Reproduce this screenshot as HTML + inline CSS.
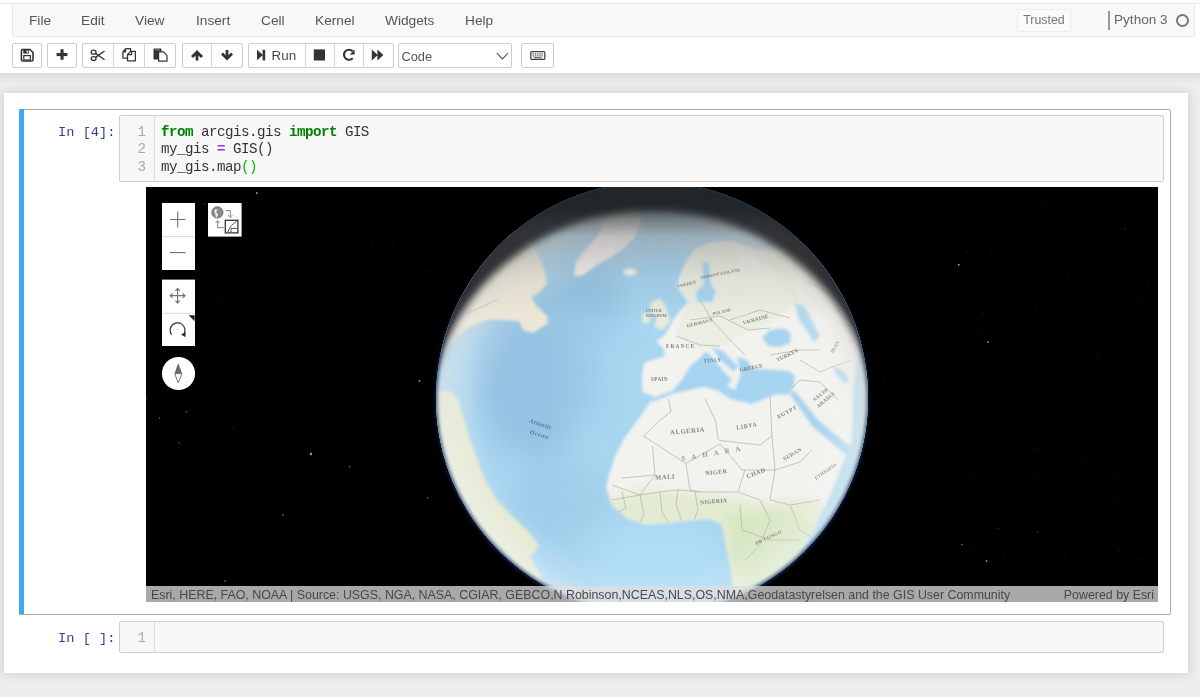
<!DOCTYPE html>
<html><head><meta charset="utf-8">
<style>
html,body{margin:0;padding:0;}
body{width:1200px;height:697px;overflow:hidden;position:relative;background:#fff;will-change:transform;font-family:"Liberation Sans",sans-serif;}
.abs{position:absolute;}
#topline{left:0;top:3px;width:1200px;height:1px;background:#ececec;}
#menubar{left:12px;top:3px;width:1181px;height:32px;background:#f8f8f8;border:1px solid #e7e7e7;border-radius:2px;}
.menu{position:absolute;top:13px;font-size:13.7px;color:#555;line-height:16px;}
#trusted{left:1017px;top:9px;width:52px;height:21px;border:1px solid #ececec;background:#fbfbfb;border-radius:2px;font-size:12.4px;color:#777;line-height:21px;text-align:center;}
#kbar{left:1108px;top:11px;width:2px;height:19px;background:#999;}
#kname{left:1114px;top:12px;font-size:13.6px;color:#666;line-height:16px;}
#kcirc{left:1176px;top:14px;width:9px;height:9px;border:2px solid #777;border-radius:50%;}
.btn{position:absolute;top:43px;height:23px;border:1px solid #ccc;background:#fff;border-radius:2px;}
.sep{position:absolute;top:0;width:1px;height:23px;background:#d4d4d4;}
#gray{left:0;top:73px;width:1200px;height:624px;background:#eee;}
#gshadow{left:0;top:73px;width:1200px;height:12px;background:linear-gradient(#dcdcdc,#eee);}
#container{left:4px;top:93px;width:1184px;height:580px;background:#fff;box-shadow:0 0 10px 1px rgba(87,87,87,0.2);}
#cell{left:19px;top:109px;width:1151px;height:504px;border:1px solid #ababab;border-left:none;border-radius:0 2px 2px 0;}
#bluebar{left:19px;top:109px;width:5px;height:505px;background:#42a5f5;}
.prompt{position:absolute;font-family:"Liberation Mono",monospace;font-size:13.7px;letter-spacing:0px;color:#303f9f;line-height:17px;}
.inbox{position:absolute;background:#f7f7f7;border:1px solid #cfcfcf;border-radius:2px;}
.gutter{position:absolute;left:0;top:0;width:34px;height:100%;border-right:1px solid #ddd;background:#f7f7f7;}
.code{position:absolute;font-family:"Liberation Mono",monospace;font-size:14.2px;letter-spacing:-0.52px;line-height:17.7px;color:#333;white-space:pre;}
.ln{position:absolute;font-family:"Liberation Mono",monospace;font-size:14.2px;line-height:17.7px;color:#aaa;text-align:right;width:27px;white-space:pre;}
.kw{color:#008000;font-weight:bold;}
.op{color:#aa22ff;font-weight:bold;}
.br{color:#0b0;}
#map{left:146px;top:187px;width:1012px;height:415px;background:#000;overflow:hidden;}
#attr{position:absolute;left:0;bottom:0;width:1012px;height:16px;background:rgba(222,222,222,0.76);font-size:12px;line-height:16px;color:#444;}
</style></head><body>
<div class="abs" id="topline"></div>
<div class="abs" id="menubar"></div>
<div class="menu" style="left:29px">File</div>
<div class="menu" style="left:81px">Edit</div>
<div class="menu" style="left:135px">View</div>
<div class="menu" style="left:196px">Insert</div>
<div class="menu" style="left:261px">Cell</div>
<div class="menu" style="left:315px">Kernel</div>
<div class="menu" style="left:385px">Widgets</div>
<div class="menu" style="left:465px">Help</div>
<div class="abs" id="trusted">Trusted</div>
<div class="abs" id="kbar"></div>
<div class="abs" id="kname">Python 3</div>
<div class="abs" id="kcirc"></div>

<!-- toolbar -->
<div class="btn" style="left:12px;width:28px"></div>
<div class="btn" style="left:47px;width:28px"></div>
<div class="btn" style="left:82px;width:92px"><div class="sep" style="left:30px"></div><div class="sep" style="left:61px"></div></div>
<div class="btn" style="left:182px;width:59px"><div class="sep" style="left:28px"></div></div>
<div class="btn" style="left:248px;width:144px"><div class="sep" style="left:56px"></div><div class="sep" style="left:85px"></div><div class="sep" style="left:114px"></div></div>
<div class="btn" style="left:398px;width:112px"></div>
<div class="btn" style="left:521px;width:31px"></div>
<svg class="abs" style="left:0;top:40px" width="560" height="30" viewBox="0 40 560 30">
<g fill="#333" stroke="none">
<!-- save -->
<path d="M21.5 49.5 h8.5 l3 3 v7.2 a1.3 1.3 0 0 1 -1.3 1.3 h-9 a1.3 1.3 0 0 1 -1.3 -1.3 v-9 a1.3 1.3 0 0 1 1.1 -1.2 z" fill="none" stroke="#333" stroke-width="1.6"/>
<rect x="23.3" y="50" width="5.5" height="3.6" fill="#333"/>
<rect x="26.6" y="50.6" width="1.3" height="2.2" fill="#fff"/>
<rect x="23.8" y="55.6" width="6.6" height="4.4" fill="none" stroke="#333" stroke-width="1.2"/>
<!-- plus -->
<rect x="56.6" y="53" width="10.8" height="3.1"/>
<rect x="60.5" y="49.2" width="3.1" height="10.6"/>
<!-- scissors -->
<g fill="none" stroke="#333" stroke-width="1.3">
<ellipse cx="93.6" cy="52.2" rx="2.4" ry="2"/>
<ellipse cx="93.6" cy="58.6" rx="2.4" ry="2"/>
<path d="M95.6 53.4 L104.5 59.8 M95.6 57.4 L104.5 51"/>
</g>
<!-- copy -->
<g fill="none" stroke="#333" stroke-width="1.25" stroke-linejoin="round">
<path d="M125.6 48.6 H130.6 V51.4 M125.6 48.6 L122.9 51.8 V58.1 H127.5 M125.6 48.6 V51.8 H122.9"/>
<path d="M130.6 51.4 H135.4 V60.8 H127.5 V54.5 Z M131.6 51.4 V54.5 H127.5"/>
</g>
<!-- paste -->
<rect x="153.5" y="48.6" width="8" height="11" rx="0.8"/>
<path d="M158.6 51.8 h4.8 l3.6 3.6 v5.8 h-8.4 z" fill="#fff" stroke="#333" stroke-width="1.2"/>
<rect x="155" y="49" width="5" height="1.5" fill="#666"/>
<!-- up -->
<path d="M197 50 L203 56 L201 58 L198.4 55.4 V60.6 H195.6 V55.4 L193 58 L191 56 Z"/>
<!-- down -->
<path d="M227 60.6 L233 54.6 L231 52.6 L228.4 55.2 V50 H225.6 V55.2 L223 52.6 L221 54.6 Z"/>
<!-- step forward -->
<path d="M257 49.8 L263 55 L257 60.2 Z"/>
<rect x="262.6" y="49.8" width="2.6" height="10.6"/>
<!-- stop -->
<rect x="313.8" y="49.4" width="11.2" height="11.1"/>
<!-- repeat -->
<path d="M352.6 51.3 A5 5 0 1 0 352.8 58.1" fill="none" stroke="#333" stroke-width="2.1"/>
<path d="M354.6 49.6 V54.4 H349.8 Z"/>
<!-- forward -->
<path d="M371.8 49.4 L377.8 54.9 L371.8 60.4 Z M377.4 49.4 L383.4 54.9 L377.4 60.4 Z"/>
<!-- chevron -->
<path d="M496.8 53.2 L502.4 59 L508 53.2" fill="none" stroke="#555" stroke-width="1.1"/>
<!-- keyboard -->
<rect x="530.8" y="51.6" width="14" height="7.8" rx="1" fill="none" stroke="#444" stroke-width="1.3"/>
<g fill="#555">
<rect x="532.6" y="53.3" width="1.4" height="1.2"/><rect x="534.8" y="53.3" width="1.4" height="1.2"/><rect x="537" y="53.3" width="1.4" height="1.2"/><rect x="539.2" y="53.3" width="1.4" height="1.2"/><rect x="541.4" y="53.3" width="1.4" height="1.2"/>
<rect x="532.6" y="55.3" width="1.4" height="1.2"/><rect x="534.8" y="55.3" width="1.4" height="1.2"/><rect x="537" y="55.3" width="1.4" height="1.2"/><rect x="539.2" y="55.3" width="1.4" height="1.2"/><rect x="541.4" y="55.3" width="1.4" height="1.2"/>
<rect x="534" y="57.2" width="7.6" height="1.1"/>
</g>
</g>
<text x="271.6" y="59.8" font-family="Liberation Sans" font-size="13.4" fill="#4a4a4a">Run</text>
<text x="401.5" y="61" font-family="Liberation Sans" font-size="12.8" fill="#555">Code</text>
</svg>

<div class="abs" id="gray"></div>
<div class="abs" id="gshadow"></div>
<div class="abs" id="container"></div>
<div class="abs" id="cell"></div>
<div class="abs" id="bluebar"></div>
<div class="prompt" style="left:58px;top:124px">In [4]:</div>
<div class="inbox" style="left:119px;top:115px;width:1043px;height:65px"><div class="gutter"></div></div>
<div class="ln" style="left:119px;top:123.5px">1
2
3</div>
<div class="code" style="left:161px;top:123.5px"><span class="kw">from</span> arcgis.gis <span class="kw">import</span> GIS
my_gis <span class="op">=</span> GIS()
my_gis.map<span class="br">()</span></div>

<div class="abs" id="map">
<svg width="1012" height="415" viewBox="146 187 1012 415" style="position:absolute;left:0;top:0;display:block">
<defs>
<clipPath id="gclip"><circle cx="652" cy="398" r="216"/></clipPath>
<radialGradient id="haze" cx="652" cy="398" r="216" gradientUnits="userSpaceOnUse">
<stop offset="0" stop-color="#fff" stop-opacity="0"/>
<stop offset="0.8" stop-color="#fff" stop-opacity="0"/>
<stop offset="0.92" stop-color="#fff" stop-opacity="0.2"/>
<stop offset="0.975" stop-color="#f4f9fc" stop-opacity="0.36"/>
<stop offset="0.99" stop-color="#d8ecf8" stop-opacity="0.5"/>
<stop offset="1" stop-color="#5a7ab0" stop-opacity="0.75"/>
</radialGradient>
<radialGradient id="fog" cx="652" cy="432" r="224" gradientUnits="userSpaceOnUse">
<stop offset="0" stop-color="#fff" stop-opacity="0"/>
<stop offset="0.72" stop-color="#fff" stop-opacity="0"/>
<stop offset="0.86" stop-color="#f0eee8" stop-opacity="0.25"/>
<stop offset="0.95" stop-color="#dcdad4" stop-opacity="0.5"/>
<stop offset="1" stop-color="#c8c6c0" stop-opacity="0.6"/>
</radialGradient>
<linearGradient id="topshade" x1="0" y1="182" x2="0" y2="320" gradientUnits="userSpaceOnUse">
<stop offset="0" stop-color="#1e2428" stop-opacity="0.95"/>
<stop offset="0.2" stop-color="#1e2428" stop-opacity="0.7"/>
<stop offset="0.4" stop-color="#404040" stop-opacity="0.28"/>
<stop offset="0.7" stop-color="#404040" stop-opacity="0.08"/>
<stop offset="1" stop-color="#404040" stop-opacity="0"/>
</linearGradient>
<filter id="blur1" x="-10%" y="-10%" width="120%" height="120%"><feGaussianBlur stdDeviation="1.4"/></filter>
<filter id="blur4" x="-20%" y="-20%" width="140%" height="140%"><feGaussianBlur stdDeviation="3.5"/></filter>
<filter id="blur12" x="-50%" y="-50%" width="200%" height="200%"><feGaussianBlur stdDeviation="14"/></filter>
<linearGradient id="glowg" x1="0" y1="182" x2="0" y2="614" gradientUnits="userSpaceOnUse"><stop offset="0" stop-color="#1a2858" stop-opacity="0"/><stop offset="0.45" stop-color="#1a2858" stop-opacity="0.5"/><stop offset="1" stop-color="#1c2c60" stop-opacity="1"/></linearGradient>
<linearGradient id="fogmaskg" x1="436" y1="0" x2="600" y2="0" gradientUnits="userSpaceOnUse"><stop offset="0" stop-color="#fff" stop-opacity="0.6"/><stop offset="1" stop-color="#fff" stop-opacity="1"/></linearGradient>
<mask id="fogmask" maskUnits="userSpaceOnUse" x="400" y="150" width="500" height="500"><rect x="400" y="150" width="500" height="500" fill="url(#fogmaskg)"/></mask>
<linearGradient id="leftshade" x1="436" y1="0" x2="560" y2="0" gradientUnits="userSpaceOnUse"><stop offset="0" stop-color="#2a4a68" stop-opacity="0.3"/><stop offset="0.5" stop-color="#2a4a68" stop-opacity="0.08"/><stop offset="1" stop-color="#2a4a68" stop-opacity="0"/></linearGradient>
<clipPath id="afr"><path d="M900 380 L900 620 L738 620 L732 576 L726 547 L722 525 L710 519 L678 522 L647 525 L628 519 L612 506 L606 487 L609 475 L615 456 L625 437 L637 421 L650 402 L700 385 Z"/></clipPath>
<filter id="g3" x="-30%" y="-30%" width="160%" height="160%"><feGaussianBlur stdDeviation="4"/></filter>
<linearGradient id="fogmaskv" x1="0" y1="182" x2="0" y2="614" gradientUnits="userSpaceOnUse"><stop offset="0" stop-color="#fff" stop-opacity="1"/><stop offset="0.45" stop-color="#fff" stop-opacity="0.85"/><stop offset="1" stop-color="#fff" stop-opacity="0.3"/></linearGradient>
<mask id="fogmask2" maskUnits="userSpaceOnUse" x="400" y="150" width="500" height="500"><rect x="400" y="150" width="500" height="500" fill="url(#fogmaskv)"/></mask>
<filter id="glow" x="-20%" y="-20%" width="140%" height="140%"><feGaussianBlur stdDeviation="1.6"/></filter>
<filter id="tb" x="-20%" y="-50%" width="140%" height="200%"><feGaussianBlur stdDeviation="0.6"/></filter>
</defs>
<rect x="146" y="187" width="1012" height="415" fill="#000"/>
<circle cx="256.8" cy="193" r="1.04" fill="#fff" opacity="0.56"/><circle cx="419.5" cy="381" r="0.88" fill="#fff" opacity="0.56"/><circle cx="405" cy="208" r="0.48" fill="#fff" opacity="0.28"/><circle cx="372" cy="242.7" r="0.48" fill="#fff" opacity="0.28"/><circle cx="393" cy="245.7" r="0.48" fill="#fff" opacity="0.28"/><circle cx="409.5" cy="259" r="0.48" fill="#fff" opacity="0.28"/><circle cx="305.6" cy="253" r="0.48" fill="#fff" opacity="0.28"/><circle cx="430.6" cy="271" r="0.48" fill="#fff" opacity="0.28"/><circle cx="302.6" cy="352" r="0.48" fill="#fff" opacity="0.28"/><circle cx="379" cy="377" r="0.48" fill="#fff" opacity="0.28"/><circle cx="221" cy="301.5" r="0.48" fill="#fff" opacity="0.28"/><circle cx="204.7" cy="203.6" r="0.56" fill="#fff" opacity="0.35"/><circle cx="311" cy="454" r="1.20" fill="#fff" opacity="0.63"/><circle cx="349.6" cy="466.8" r="0.80" fill="#fff" opacity="0.49"/><circle cx="283" cy="515" r="0.80" fill="#fff" opacity="0.56"/><circle cx="427.6" cy="497.8" r="0.80" fill="#fff" opacity="0.49"/><circle cx="225" cy="581" r="0.80" fill="#fff" opacity="0.56"/><circle cx="186.7" cy="411.7" r="0.72" fill="#fff" opacity="0.49"/><circle cx="159.5" cy="418" r="0.72" fill="#fff" opacity="0.42"/><circle cx="179" cy="442.7" r="0.72" fill="#fff" opacity="0.42"/><circle cx="233" cy="428.6" r="0.48" fill="#fff" opacity="0.28"/><circle cx="146" cy="399" r="0.64" fill="#fff" opacity="0.42"/><circle cx="958.8" cy="264.7" r="0.96" fill="#fff" opacity="0.59"/><circle cx="988" cy="342" r="0.88" fill="#fff" opacity="0.56"/><circle cx="1125" cy="229" r="0.56" fill="#fff" opacity="0.35"/><circle cx="1153.7" cy="228" r="0.48" fill="#fff" opacity="0.28"/><circle cx="1122" cy="251" r="0.48" fill="#fff" opacity="0.28"/><circle cx="1068" cy="276" r="0.48" fill="#fff" opacity="0.28"/><circle cx="1148" cy="283" r="0.48" fill="#fff" opacity="0.28"/><circle cx="1141.6" cy="301" r="0.48" fill="#fff" opacity="0.28"/><circle cx="1036" cy="310" r="0.48" fill="#fff" opacity="0.28"/><circle cx="1066" cy="308" r="0.48" fill="#fff" opacity="0.28"/><circle cx="1009" cy="328" r="0.48" fill="#fff" opacity="0.28"/><circle cx="979" cy="331" r="0.48" fill="#fff" opacity="0.28"/><circle cx="897.6" cy="339" r="0.48" fill="#fff" opacity="0.28"/><circle cx="917" cy="361.7" r="0.48" fill="#fff" opacity="0.28"/><circle cx="986.5" cy="196" r="0.48" fill="#fff" opacity="0.28"/><circle cx="1046" cy="203.6" r="0.48" fill="#fff" opacity="0.28"/><circle cx="967" cy="252" r="0.48" fill="#fff" opacity="0.28"/><circle cx="991" cy="251" r="0.48" fill="#fff" opacity="0.28"/><circle cx="979" cy="284" r="0.48" fill="#fff" opacity="0.28"/><circle cx="983" cy="313.5" r="0.48" fill="#fff" opacity="0.28"/><circle cx="1096.7" cy="354.8" r="0.48" fill="#fff" opacity="0.28"/><circle cx="884" cy="381" r="0.48" fill="#fff" opacity="0.28"/><circle cx="986.5" cy="561" r="0.88" fill="#fff" opacity="0.56"/><circle cx="961.8" cy="544.5" r="0.80" fill="#fff" opacity="0.49"/><circle cx="998.5" cy="528.5" r="0.56" fill="#fff" opacity="0.35"/><circle cx="1037.7" cy="531.6" r="0.56" fill="#fff" opacity="0.35"/><circle cx="1037.7" cy="448.7" r="0.48" fill="#fff" opacity="0.28"/><circle cx="1083" cy="461" r="0.48" fill="#fff" opacity="0.28"/><circle cx="1052.8" cy="463.8" r="0.48" fill="#fff" opacity="0.28"/><circle cx="997" cy="457.8" r="0.48" fill="#fff" opacity="0.28"/><circle cx="973" cy="475" r="0.48" fill="#fff" opacity="0.28"/><circle cx="921.7" cy="494.8" r="0.48" fill="#fff" opacity="0.28"/><circle cx="914" cy="419" r="0.48" fill="#fff" opacity="0.28"/><circle cx="1107" cy="417" r="0.48" fill="#fff" opacity="0.28"/><circle cx="1117.5" cy="479.5" r="0.48" fill="#fff" opacity="0.28"/><circle cx="1114.5" cy="497.5" r="0.48" fill="#fff" opacity="0.28"/><circle cx="1119" cy="550.5" r="0.48" fill="#fff" opacity="0.28"/><circle cx="1141.6" cy="559" r="0.48" fill="#fff" opacity="0.28"/><circle cx="906.7" cy="571.6" r="0.48" fill="#fff" opacity="0.28"/><circle cx="1004.6" cy="557.8" r="0.48" fill="#fff" opacity="0.28"/><circle cx="947" cy="556.6" r="0.48" fill="#fff" opacity="0.28"/><circle cx="897.6" cy="551.7" r="0.48" fill="#fff" opacity="0.28"/><circle cx="1065" cy="557" r="0.48" fill="#fff" opacity="0.28"/><circle cx="1037.7" cy="478.3" r="0.48" fill="#fff" opacity="0.28"/><circle cx="974.5" cy="548.7" r="0.48" fill="#fff" opacity="0.28"/>
<circle cx="652" cy="398.5" r="217.5" fill="url(#glowg)" filter="url(#glow)"/>
<g clip-path="url(#gclip)">
<rect x="430" y="180" width="450" height="440" fill="#a8d5f0"/>
<g filter="url(#blur12)">
<ellipse cx="535" cy="370" rx="60" ry="90" fill="#95c3e3"/>
<ellipse cx="580" cy="300" rx="45" ry="40" fill="#98c6e4"/>
<ellipse cx="560" cy="500" rx="45" ry="40" fill="#9ecde9"/>
<ellipse cx="660" cy="565" rx="70" ry="40" fill="#b0ddf6"/>
<path d="M585 320 Q555 420 595 560" stroke="#b0d8f0" stroke-width="8" fill="none" opacity="0.6"/>
</g>
<g filter="url(#blur1)">
<!-- North America -->
<path d="M430 225 L505 222 L530 240 L543 266 L547 283 L540 292 L531 297 L536 305 L547 316 L548 323 L533 333 L523 330 L519 321 L492 319 L474 324 L457 336 L447 350 L430 360 Z" fill="#ede7d6"/>
<!-- Greenland -->
<path d="M574 276 L576 262 L586 249 L596 238 L602 226 L608 216 L618 206 L636 204 L641 224 L634 238 L624 248 L611 257 L597 265 L583 275 Z" fill="#f6f3f0"/>
<ellipse cx="630" cy="272" rx="7" ry="4" fill="#f4f2ee"/>
<!-- UK / Ireland -->
<path d="M651 302 L660 298 L666 306 L670 322 L662 330 L654 327 L657 318 L650 312 Z" fill="#e8ecdc"/>
<path d="M642 314 L649 312 L650 322 L643 324 Z" fill="#e6ecd8"/>
<!-- Eurasia + Africa -->
<path d="M733 241 L752 248 L772 252 L790 242 L820 236 L900 226 L900 620 L738 620 L732 576 L726 547 L722 525 L710 519 L678 522 L647 525 L628 519 L612 506 L606 487 L609 475 L615 456 L625 437 L637 421 L650 402 L655 397 L648 394 L642 392 L642 375 L644 363 L652 360 L665 356 L663 348 L656 341 L665 335 L672 322 L680 311 L688 302 L683 295 L677 287 L680 275 L687 260 L695 249 L711 242 Z" fill="#f2f2ee"/>
<!-- Europe greenish tint -->
<path d="M684 262 L700 246 L730 242 L740 262 L760 270 L790 280 L800 300 L780 318 L752 330 L720 346 L700 348 L676 336 L683 312 L690 300 L680 290 Z" fill="#e4ead6" opacity="0.5"/>
<path d="M752 250 L800 240 L835 245 L845 280 L820 290 L790 280 L760 262 Z" fill="#e4e9d6" opacity="0.5"/>
<!-- sahel / central Africa green -->


<g clip-path="url(#afr)"><g filter="url(#g3)">
<path d="M600 500 L640 490 L700 494 L740 498 L770 504 L810 498 L835 508 L840 530 L800 600 L738 610 L600 540 Z" fill="#e3ebd2"/>
<path d="M725 515 L765 512 L805 516 L825 532 L795 585 L748 595 L730 550 Z" fill="#d9e7c5"/>
</g></g>
<!-- South America -->
<path d="M430 390 L452 392 L458 400 L470 440 L485 480 L497 500 L510 514 L530 533 L539 546 L530 557 L536 567 L543 580 L550 620 L430 620 Z" fill="#e3e8cf"/>
<!-- Baltic / Bothnia -->
<path d="M702 262 L709 262 L711 284 L716 292 L712 302 L697 302 L696 292 L704 284 Z" fill="#a9d6f1"/>
<!-- North sea gap (Norway-UK) -->
<!-- Mediterranean -->
<path d="M652 399 L660 395 L672 391 L682 380 L690 366 L700 358 L706 351 L713 358 L721 368 L732 380 L727 386 L735 390 L741 374 L737 357 L747 360 L752 368 L760 369 L788 371 L795 375 L793 390 L787 395 L777 394 L752 404 L730 399 L717 390 L703 387 L672 394 L652 402 Z" fill="#a6d4f0"/>
<!-- Adriatic -->
<path d="M712 348 L722 350 L738 366 L734 372 L720 360 Z" fill="#a6d4f0"/>
<!-- Black Sea -->
<path d="M762 337 L770 330 L784 328 L791 333 L790 343 L780 347 L768 346 Z" fill="#a6d4f0"/>
<!-- Caspian -->
<path d="M795 303 L804 305 L811 318 L820 336 L814 342 L806 330 L798 318 Z" fill="#a6d4f0"/>
<!-- Red Sea -->
<path d="M789 393 L796 392 L818 420 L852 448 L846 455 L812 426 Z" fill="#a6d4f0"/>
<!-- Persian gulf -->
<path d="M833 366 L845 372 L850 383 L843 382 L836 374 Z" fill="#a6d4f0"/>
<!-- Indian ocean along east -->
<path d="M852 440 L853 405 L854 380 L858 356 L866 340 L880 330 L880 620 L765 620 L780 585 L800 555 L816 525 L828 500 L840 470 Z" fill="#a8d6f0"/>
</g>
<!-- borders -->
<g stroke="#b4b4ae" stroke-width="0.75" fill="none" filter="url(#tb)">
<path d="M668.7 399 L671 411.8 L660.6 419.8 L643.4 436 L685.9 463.4 L720 444"/>
<path d="M705 399 L715.7 421 L718 439.3 L720 440.5 L760 445 L772 436"/>
<path d="M770 396 L772 436 L775 470"/>
<path d="M652.6 446 L655 475 L622 478"/>
<path d="M685.9 463.4 L690 490 L700 492 L738 492"/>
<path d="M720 444 L742 470 L745 470 L738 492 L760 500"/>
<path d="M745 470 L775 470 L800 462 L812 450"/>
<path d="M775 470 L770 500 L790 505 L820 500"/>
<path d="M612 500 L640 495 L655 475"/>
<path d="M740 505 L742 530 L770 540 L800 540"/>
<path d="M690 320 L720 316 L748 330 L770 328"/>
<path d="M676 336 L700 345 L720 346"/>
<path d="M800 360 L820 372 L835 366 L852 360"/>
<path d="M792 388 L800 380 L820 382 L838 400"/>
<path d="M622 492 L626 508 L618 512"/>
<path d="M640 495 L644 515 L640 522"/>
<path d="M660 492 L662 512 L668 522"/>
<path d="M678 490 L676 505 L682 521"/>
<path d="M695 492 L698 510 L694 520"/>
<path d="M612 485 L640 495 L660 492 L678 490 L700 492"/>
<path d="M760 500 L770 520 L760 545 L745 560"/>
<path d="M790 505 L800 530 L815 540"/>
<path d="M700 300 L712 320 L730 340 L745 355"/>
<path d="M730 320 L760 310 L790 318"/>
<path d="M770 355 L800 350 L820 350"/>
<path d="M805 280 L840 300"/>
</g>
<g stroke="#707070" stroke-width="0.6" fill="none" opacity="0.7" filter="url(#tb)">
<path d="M466 314 L497 300"/>
<path d="M815 260 L845 290"/>
</g>
<!-- labels -->
<g font-family="Liberation Serif" font-weight="bold" fill="#555" opacity="0.72" filter="url(#tb)" transform="translate(0 0)">
<text x="670" y="433" font-size="6.6" letter-spacing="0.6" transform="rotate(-5 688 430)">ALGERIA</text>
<text x="736" y="428" font-size="6.0" letter-spacing="0.5" transform="rotate(-10 746 424)">LIBYA</text>
<text x="680" y="455" font-size="7.0" letter-spacing="6" fill="#777" transform="rotate(-10 716 446)">SAHARA</text>
<text x="655" y="479" font-size="6.6" letter-spacing="0.5" transform="rotate(-3 668 476)">MALI</text>
<text x="705" y="474" font-size="6.2" letter-spacing="0.4" transform="rotate(-6 718 471)">NIGER</text>
<text x="745" y="475" font-size="6.2" letter-spacing="0.4" transform="rotate(-20 756 470)">CHAD</text>
<text x="700" y="503" font-size="5.7" letter-spacing="0.3" transform="rotate(-5 716 500)">NIGERIA</text>
<text x="775" y="415" font-size="5.7" letter-spacing="0.4" transform="rotate(-28 784 410)">EGYPT</text>
<text x="780" y="456" font-size="5.5" letter-spacing="0.3" transform="rotate(-30 791 450)">SUDAN</text>
<text x="809" y="474" font-size="4.8" letter-spacing="0.2" transform="rotate(-35 822 466)">ETHIOPIA</text>
<text x="750" y="537" font-size="4.8" letter-spacing="0.3" transform="rotate(-25 771 527)">DR CONGO</text>
<text x="810" y="396" font-size="5.3" letter-spacing="0.2" transform="rotate(-40 820 392)">SAUDI</text>
<text x="814" y="404" font-size="5.3" letter-spacing="0.2" transform="rotate(-40 822 400)">ARABIA</text>
<text x="826" y="353" font-size="5.3" transform="rotate(-60 830 347)">IRAN</text>
<text x="774" y="358" font-size="5.3" letter-spacing="0.2" transform="rotate(-25 784 352)">TURKEY</text>
<text x="739" y="370" font-size="5.3" letter-spacing="0.2" transform="rotate(-12 748 366)">GREECE</text>
<text x="704" y="362" font-size="5.3" letter-spacing="0.3" transform="rotate(-5 711 359)">ITALY</text>
<text x="651" y="380.5" font-size="5.3" letter-spacing="0.3">SPAIN</text>
<text x="666" y="348" font-size="5.3" letter-spacing="1.2">FRANCE</text>
<text x="686" y="325" font-size="4.8" letter-spacing="0.2" transform="rotate(-14 697 322)">GERMANY</text>
<text x="712" y="314" font-size="4.4" transform="rotate(-14 718 311)">POLAND</text>
<text x="742" y="322" font-size="5.3" letter-spacing="0.2" transform="rotate(-15 752 318)">UKRAINE</text>
<text x="646" y="312" font-size="4.0">UNITED</text>
<text x="646" y="317" font-size="4.0">KINGDOM</text>
<text x="677" y="286" font-size="4.4" transform="rotate(-12 684 284)">SWEDEN</text>
<text x="700" y="278" font-size="4.4" transform="rotate(-12 706 275)">NORWAY</text>
<text x="720" y="274" font-size="4.4" transform="rotate(-12 726 271)">FINLAND</text>
</g>
<g font-family="Liberation Serif" font-style="italic" font-weight="bold" fill="#4f7598" filter="url(#tb)">
<text x="529" y="427" font-size="6.2" letter-spacing="0.4" transform="rotate(18 543 425)">Atlantic</text>
<text x="530" y="437" font-size="6.2" letter-spacing="0.6" transform="rotate(18 541 434)">Ocean</text>
</g>
</g>
<!-- haze -->
<circle cx="652" cy="398" r="216" fill="url(#haze)"/>
<!-- dark shading top -->
<g clip-path="url(#gclip)">
<g mask="url(#fogmask)"><circle cx="652" cy="432" r="224" fill="url(#fog)" mask="url(#fogmask2)"/></g>

<g filter="url(#blur4)">
<path fill="#25292b" fill-rule="evenodd" d="M400 150 L900 150 L900 640 L400 640 Z M427 432 A225 222 0 1 0 877 432 A225 222 0 1 0 427 432 Z" opacity="0.96"/>
</g>
<rect x="430" y="180" width="450" height="170" fill="url(#topshade)"/>
<circle cx="652" cy="398" r="215.5" fill="none" stroke="#203040" stroke-width="2.5" opacity="0.55" filter="url(#glow)"/>
</g>
</svg>

<div id="attr"></div>
<svg width="110" height="210" viewBox="146 187 110 210" style="position:absolute;left:0;top:0;display:block">
<!-- zoom group -->
<rect x="162" y="203" width="33" height="67" fill="#fff"/>
<rect x="163" y="236.2" width="31" height="0.9" fill="#d6d6d6"/>
<path d="M170 219.5 H185.5 M177.7 211.6 V227.4" stroke="#6e6e6e" stroke-width="1.1" fill="none"/>
<path d="M170 252.6 H185.5" stroke="#6e6e6e" stroke-width="1.1" fill="none"/>
<!-- basemap toggle -->
<rect x="208" y="203" width="33.6" height="33.6" fill="#fff"/>
<circle cx="217.4" cy="212.4" r="5.6" fill="#8a8a8a" stroke="#666" stroke-width="0.9"/>
<path d="M214.5 209.6 q2 -1 3.2 0.4 q-2 1.2 -1.2 2.8 q1.6 0.6 1.4 2.6 q-1 1.2 -1.6 2.6 q-1.4 -2 -0.6 -3.4 q-1.6 -1.2 -1.2 -5 z" fill="#fff" opacity="0.85"/>
<path d="M225.6 210.6 H230.3 V216.4" stroke="#777" stroke-width="0.9" fill="none"/>
<path d="M228.3 215.2 L230.3 217.6 L232.3 215.2" stroke="#777" stroke-width="0.9" fill="none"/>
<path d="M224 227.6 H217.6 V221.6" stroke="#777" stroke-width="0.9" fill="none"/>
<path d="M215.6 223 L217.6 220.6 L219.6 223" stroke="#777" stroke-width="0.9" fill="none"/>
<rect x="225.3" y="220.3" width="12.6" height="12.6" fill="#fff" stroke="#333" stroke-width="1.3"/>
<path d="M227.8 232.6 Q229.2 226 236.6 221.4 M231 228.4 H237.6 M231 228.4 V232.6" stroke="#555" stroke-width="1" fill="none"/>
<!-- nav group -->
<rect x="162" y="279.6" width="33" height="66.4" fill="#fff"/>
<rect x="163" y="312.8" width="32" height="0.9" fill="#d6d6d6"/>
<g stroke="#777" stroke-width="1.2" fill="none">
<path d="M177.6 288.6 V302.8 M170.4 295.7 H184.8"/>
<path d="M175.4 290.8 L177.6 288.4 L179.8 290.8 M175.4 300.6 L177.6 303 L179.8 300.6 M172.6 293.5 L170.2 295.7 L172.6 297.9 M182.6 293.5 L185 295.7 L182.6 297.9"/>
</g>
<path d="M188.6 315.3 H194.6 V321.3 Z" fill="#222"/>
<path d="M184.2 333.4 A7.4 7.4 0 1 0 171.6 334.6" stroke="#333" stroke-width="1.2" fill="none"/>
<path d="M181 334.4 L185.4 337.2 L185.8 332 Z" fill="#333"/>
<circle cx="177.6" cy="329.2" r="0.5" fill="#999"/>
<!-- compass -->
<circle cx="178.5" cy="373.5" r="16.6" fill="#fff"/>
<path d="M178.2 363 L182.1 373.4 L174.5 373.4 Z" fill="#6a6a6a"/>
<path d="M174.7 373.6 L181.9 373.6 L178.2 383 Z" fill="#fff" stroke="#777" stroke-width="1"/>
</svg>
<div style="position:absolute;left:5px;top:400px;font-size:12.4px;color:#484848;line-height:16px;white-space:nowrap;">Esri, HERE, FAO, NOAA | Source: USGS, NGA, NASA, CGIAR, GEBCO,N Robinson,NCEAS,NLS,OS,NMA,Geodatastyrelsen and the GIS User Community</div>
<div style="position:absolute;right:4px;top:400px;font-size:12.4px;color:#484848;line-height:16px;white-space:nowrap;">Powered by Esri</div>

</div>

<div class="prompt" style="left:58px;top:630px">In [ ]:</div>
<div class="inbox" style="left:119px;top:621px;width:1043px;height:30px"><div class="gutter"></div></div>
<div class="ln" style="left:119px;top:630px">1</div>
</body></html>
